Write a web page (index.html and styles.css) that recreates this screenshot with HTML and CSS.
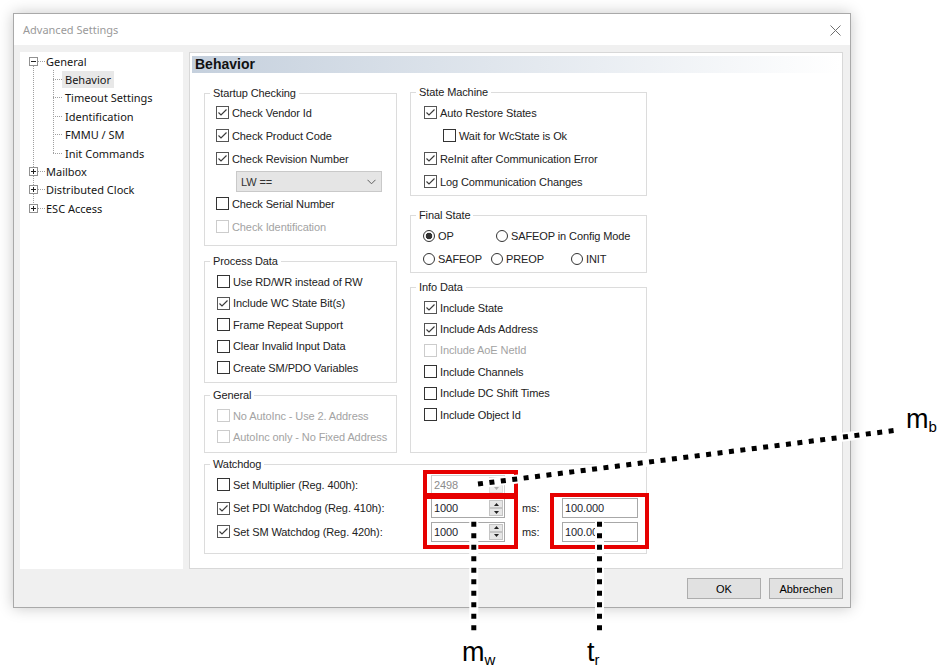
FILE: index.html
```html
<!DOCTYPE html>
<html>
<head>
<meta charset="utf-8">
<title>Advanced Settings</title>
<link rel="stylesheet" href="styles.css">
</head>
<body>
<div class="page">
  <div class="dialog">
    <div class="titlebar">
      <span class="title">Advanced Settings</span>
      <svg class="close" width="11" height="11" viewBox="0 0 11 11"><path d="M0.5 0.5L10.5 10.5M10.5 0.5L0.5 10.5" stroke="#707070" stroke-width="1" fill="none"/></svg>
    </div>
    <div class="dlg-body">
      <div class="main">
        <div class="tree">
          <div class="tree-root">
            <div class="trow root"><svg class="exp" width="9" height="9" viewBox="0 0 9 9"><rect x="0.5" y="0.5" width="8" height="8" fill="#fff" stroke="#919191"/><path d="M2 4.5h5" stroke="#222"/></svg><span class="hl"></span><span class="tl">General</span></div>
            <div class="trow child"><span class="hl"></span><span class="tl sel">Behavior</span></div>
            <div class="trow child"><span class="hl"></span><span class="tl">Timeout Settings</span></div>
            <div class="trow child"><span class="hl"></span><span class="tl">Identification</span></div>
            <div class="trow child"><span class="hl"></span><span class="tl">FMMU / SM</span></div>
            <div class="trow child"><span class="hl"></span><span class="tl">Init Commands</span></div>
            <div class="trow root"><svg class="exp" width="9" height="9" viewBox="0 0 9 9"><rect x="0.5" y="0.5" width="8" height="8" fill="#fff" stroke="#919191"/><path d="M2 4.5h5M4.5 2v5" stroke="#222"/></svg><span class="hl"></span><span class="tl">Mailbox</span></div>
            <div class="trow root"><svg class="exp" width="9" height="9" viewBox="0 0 9 9"><rect x="0.5" y="0.5" width="8" height="8" fill="#fff" stroke="#919191"/><path d="M2 4.5h5M4.5 2v5" stroke="#222"/></svg><span class="hl"></span><span class="tl">Distributed Clock</span></div>
            <div class="trow root"><svg class="exp" width="9" height="9" viewBox="0 0 9 9"><rect x="0.5" y="0.5" width="8" height="8" fill="#fff" stroke="#919191"/><path d="M2 4.5h5M4.5 2v5" stroke="#222"/></svg><span class="hl"></span><span class="tl">ESC Access</span></div>
          </div>
        </div>

        <div class="panel">
          <div class="ph">Behavior</div>
          <div class="content">
            <div class="cols">
              <div class="col">
                <div class="grp g-sc">
                  <div class="lg">Startup Checking</div>
                  <div class="rows">
                    <div class="row"><span class="chk on"><svg viewBox="0 0 11 11"><path d="M1.5 5.5L4 8L9.5 2.5"/></svg></span><span>Check Vendor Id</span></div>
                    <div class="row"><span class="chk on"><svg viewBox="0 0 11 11"><path d="M1.5 5.5L4 8L9.5 2.5"/></svg></span><span>Check Product Code</span></div>
                    <div class="row"><span class="chk on"><svg viewBox="0 0 11 11"><path d="M1.5 5.5L4 8L9.5 2.5"/></svg></span><span>Check Revision Number</span></div>
                    <div class="combo"><span>LW ==</span><svg width="9" height="6" viewBox="0 0 9 6"><path d="M0.5 0.8L4.5 4.8L8.5 0.8" stroke="#606060" fill="none"/></svg></div>
                    <div class="row"><span class="chk"></span><span>Check Serial Number</span></div>
                    <div class="row dis"><span class="chk"></span><span>Check Identification</span></div>
                  </div>
                </div>
                <div class="grp g-pd">
                  <div class="lg">Process Data</div>
                  <div class="rows">
                    <div class="row"><span class="chk"></span><span>Use RD/WR instead of RW</span></div>
                    <div class="row"><span class="chk on"><svg viewBox="0 0 11 11"><path d="M1.5 5.5L4 8L9.5 2.5"/></svg></span><span>Include WC State Bit(s)</span></div>
                    <div class="row"><span class="chk"></span><span>Frame Repeat Support</span></div>
                    <div class="row"><span class="chk"></span><span>Clear Invalid Input Data</span></div>
                    <div class="row"><span class="chk"></span><span>Create SM/PDO Variables</span></div>
                  </div>
                </div>
                <div class="grp g-ge">
                  <div class="lg">General</div>
                  <div class="rows">
                    <div class="row dis"><span class="chk"></span><span>No AutoInc - Use 2. Address</span></div>
                    <div class="row dis"><span class="chk"></span><span>AutoInc only - No Fixed Address</span></div>
                  </div>
                </div>
              </div>

              <div class="col">
                <div class="grp g-sm">
                  <div class="lg">State Machine</div>
                  <div class="rows">
                    <div class="row"><span class="chk on"><svg viewBox="0 0 11 11"><path d="M1.5 5.5L4 8L9.5 2.5"/></svg></span><span>Auto Restore States</span></div>
                    <div class="row indent"><span class="chk"></span><span>Wait for WcState is Ok</span></div>
                    <div class="row"><span class="chk on"><svg viewBox="0 0 11 11"><path d="M1.5 5.5L4 8L9.5 2.5"/></svg></span><span>ReInit after Communication Error</span></div>
                    <div class="row"><span class="chk on"><svg viewBox="0 0 11 11"><path d="M1.5 5.5L4 8L9.5 2.5"/></svg></span><span>Log Communication Changes</span></div>
                  </div>
                </div>
                <div class="grp g-fs">
                  <div class="lg">Final State</div>
                  <div class="rows">
                    <div class="row">
                      <span class="ropt w-op"><span class="rad on"></span><span>OP</span></span>
                      <span class="ropt"><span class="rad"></span><span>SAFEOP in Config Mode</span></span>
                    </div>
                    <div class="row">
                      <span class="ropt w-safe"><span class="rad"></span><span>SAFEOP</span></span>
                      <span class="ropt w-pre"><span class="rad"></span><span>PREOP</span></span>
                      <span class="ropt"><span class="rad"></span><span>INIT</span></span>
                    </div>
                  </div>
                </div>
                <div class="grp g-id">
                  <div class="lg">Info Data</div>
                  <div class="rows">
                    <div class="row"><span class="chk on"><svg viewBox="0 0 11 11"><path d="M1.5 5.5L4 8L9.5 2.5"/></svg></span><span>Include State</span></div>
                    <div class="row"><span class="chk on"><svg viewBox="0 0 11 11"><path d="M1.5 5.5L4 8L9.5 2.5"/></svg></span><span>Include Ads Address</span></div>
                    <div class="row dis"><span class="chk"></span><span>Include AoE NetId</span></div>
                    <div class="row"><span class="chk"></span><span>Include Channels</span></div>
                    <div class="row"><span class="chk"></span><span>Include DC Shift Times</span></div>
                    <div class="row"><span class="chk"></span><span>Include Object Id</span></div>
                  </div>
                </div>
              </div>
            </div>

            <div class="grp g-wd">
              <div class="lg">Watchdog</div>
              <div class="rows">
                <div class="wrow">
                  <div class="row"><span class="chk"></span><span>Set Multiplier (Reg. 400h):</span></div>
                  <div class="spin dis"><span class="val">2498</span><span class="sbtns"><span class="sb"><svg width="5" height="3" viewBox="0 0 5 3"><path d="M0 3L2.5 0L5 3Z" fill="#b0b0b0"/></svg></span><span class="sb"><svg width="5" height="3" viewBox="0 0 5 3"><path d="M0 0L2.5 3L5 0Z" fill="#b0b0b0"/></svg></span></span></div>
                </div>
                <div class="wrow">
                  <div class="row"><span class="chk on"><svg viewBox="0 0 11 11"><path d="M1.5 5.5L4 8L9.5 2.5"/></svg></span><span>Set PDI Watchdog (Reg. 410h):</span></div>
                  <div class="spin"><span class="val">1000</span><span class="sbtns"><span class="sb"><svg width="5" height="3" viewBox="0 0 5 3"><path d="M0 3L2.5 0L5 3Z" fill="#222"/></svg></span><span class="sb"><svg width="5" height="3" viewBox="0 0 5 3"><path d="M0 0L2.5 3L5 0Z" fill="#222"/></svg></span></span></div>
                  <span class="ms">ms:</span>
                  <div class="tb">100.000</div>
                </div>
                <div class="wrow">
                  <div class="row"><span class="chk on"><svg viewBox="0 0 11 11"><path d="M1.5 5.5L4 8L9.5 2.5"/></svg></span><span>Set SM Watchdog (Reg. 420h):</span></div>
                  <div class="spin"><span class="val">1000</span><span class="sbtns"><span class="sb"><svg width="5" height="3" viewBox="0 0 5 3"><path d="M0 3L2.5 0L5 3Z" fill="#222"/></svg></span><span class="sb"><svg width="5" height="3" viewBox="0 0 5 3"><path d="M0 0L2.5 3L5 0Z" fill="#222"/></svg></span></span></div>
                  <span class="ms">ms:</span>
                  <div class="tb">100.000</div>
                </div>
              </div>
            </div>
          </div>
        </div>
      </div>
      <div class="buttons">
        <button class="btn">OK</button>
        <button class="btn">Abbrechen</button>
      </div>
    </div>
  </div>
</div>

<svg class="annot" width="937" height="669" viewBox="0 0 937 669">
  <g fill="none" stroke="#e60000" stroke-width="4">
    <rect x="425" y="472" width="91" height="23"/>
    <rect x="425" y="497" width="91" height="50"/>
    <rect x="552" y="495" width="95" height="52"/>
  </g>
  <g stroke="#ffffff" stroke-width="9" fill="none">
    <line x1="476" y1="484.3" x2="900" y2="429.7"/>
    <line x1="473.8" y1="519" x2="473.8" y2="634"/>
    <line x1="599.5" y1="519" x2="599.5" y2="634"/>
  </g>
  <g stroke="#000000" stroke-width="5" stroke-dasharray="5 6.5" fill="none">
    <line x1="478" y1="484" x2="898" y2="430"/>
    <line x1="473.8" y1="521.7" x2="473.8" y2="632"/>
    <line x1="599.5" y1="521.7" x2="599.5" y2="632"/>
  </g>
  <text class="sym" x="906" y="428">m<tspan class="sub" dy="4">b</tspan></text>
  <text class="sym" x="462" y="661">m<tspan class="sub" dy="4">w</tspan></text>
  <text class="sym" x="587" y="661">t<tspan class="sub" dy="4">r</tspan></text>
</svg>
</body>
</html>
```

FILE: styles.css
```css
* { box-sizing: border-box; }
html, body { margin: 0; padding: 0; background: #ffffff; }
body {
  width: 937px;
  height: 669px;
  overflow: hidden;
  position: relative;
  font-family: "Liberation Sans", Arial, sans-serif;
  font-size: 11px;
  color: #222;
}
.page { padding: 13px 0 0 13px; }
.dialog {
  width: 838px;
  height: 595px;
  border: 1px solid #a9a9a9;
  background: #f0f0f0;
  box-shadow: 0 0 14px rgba(0, 0, 0, 0.22);
  display: flex;
  flex-direction: column;
}
.titlebar {
  height: 31px;
  flex: none;
  background: #ffffff;
  display: flex;
  align-items: center;
  justify-content: space-between;
  padding: 0 9px 0 9px;
}
.title { font-family: "Noto Sans", sans-serif; font-size: 11px; color: #9a9a9a; }
.close { display: block; margin-top: 1px; }
.dlg-body { flex: 1; padding: 7px 7px 8px 6px; display: flex; flex-direction: column; }
.main { display: flex; gap: 6px; height: 517px; flex: none; }

/* tree */
.tree {
  width: 163px;
  background: #ffffff;
  font-family: "Noto Sans", sans-serif;
  font-size: 11px;
  color: #151515;
}
.tree-root {
  background-image:
    repeating-linear-gradient(to bottom, #a0a0a0 0 1px, transparent 1px 2px),
    repeating-linear-gradient(to bottom, #a0a0a0 0 1px, transparent 1px 2px);
  background-repeat: no-repeat;
  background-size: 1px 138px, 1px 84px;
  background-position: 13px 14px, 33px 18px;
}
.trow { height: 18.4px; display: flex; align-items: center; white-space: nowrap; }
.trow.root { padding-left: 9px; }
.trow.child { padding-left: 33px; }
.exp { display: block; flex: none; }
.hl { height: 0; border-top: 1px dotted #a0a0a0; flex: none; }
.root .hl { width: 7px; }
.child .hl { width: 9px; }
.tl { padding: 1px 1px; line-height: 15px; }
.child .tl { padding: 1px 3px; }
.tl.sel { background: #e8e8e8; }

/* right panel */
.panel { flex: 1; background: #ffffff; border: 1px solid #d8d8d8; padding: 3px 2px; }
.ph {
  height: 17px;
  line-height: 17px;
  padding-left: 3px;
  font-weight: bold;
  font-size: 14px;
  color: #111;
  background: linear-gradient(to right, #c5d0dd, #ffffff);
}
.content { margin: 19px 0 0 12px; width: 443px; letter-spacing: -0.1px; }
.cols { display: grid; grid-template-columns: 193px 237px; column-gap: 13px; }
.col { display: flex; flex-direction: column; }
.grp { border: 1px solid #dcdcdc; }
.lg {
  margin: -7px 0 0 5px;
  padding: 0 3px;
  height: 13px;
  line-height: 13px;
  width: max-content;
  background: #ffffff;
  color: #222;
}
.row { display: flex; align-items: center; gap: 3px; white-space: nowrap; }
.dis { color: #a3a3a3; }
.chk {
  width: 13px;
  height: 13px;
  flex: none;
  border: 1px solid #333;
  background: #fff;
  display: flex;
}
.chk.on { border-color: #555; }
.chk svg { width: 11px; height: 11px; fill: none; stroke: #3a3a3a; stroke-width: 1.15; }
.dis .chk { border-color: #cccccc; }

/* startup checking */
.g-sc { height: 153px; margin-top: 1px; }
.g-sc .rows { padding: 1px 0 0 11px; }
.g-sc .row { height: 23px; }
.combo {
  margin: 1px 0 0 20px;
  width: 146px;
  height: 21px;
  background: #e5e5e5;
  border: 1px solid #c9c9c9;
  display: flex;
  align-items: center;
  justify-content: space-between;
  padding: 0 5px 0 4px;
  color: #333;
}
.combo svg { display: block; }

/* process data */
.g-pd { height: 122px; margin-top: 15px; }
.g-pd .rows { padding: 3px 0 0 12px; }
.g-pd .row { height: 21.5px; }

/* general */
.g-ge { height: 58px; margin-top: 12px; }
.g-ge .rows { padding: 3px 0 0 12px; }
.g-ge .row { height: 21px; }

/* state machine */
.g-sm { height: 104px; }
.g-sm .rows { padding: 2px 0 0 13px; }
.g-sm .row { height: 23px; }
.g-sm .row.indent { padding-left: 19px; }

/* final state */
.g-fs { height: 58px; margin-top: 19px; }
.g-fs .rows { padding: 2px 0 0 12px; }
.g-fs .row { height: 23px; gap: 0; }
.ropt { display: flex; align-items: center; gap: 3px; }
.w-op { width: 73px; }
.w-safe { width: 68px; }
.w-pre { width: 80px; }
.rad {
  width: 12px;
  height: 12px;
  border-radius: 50%;
  border: 1px solid #333;
  background: #fff;
  flex: none;
}
.rad.on { background: radial-gradient(circle, #333 0 3px, #fff 3.6px); }

/* info data */
.g-id { height: 166px; margin-top: 14px; }
.g-id .rows { padding: 3px 0 0 13px; }
.g-id .row { height: 21.4px; }

/* watchdog */
.g-wd { height: 90px; margin-top: 11px; }
.g-wd .rows { padding: 2px 0 0 12px; }
.wrow {
  display: grid;
  grid-template-columns: 214px 74px 57px 76px;
  align-items: center;
  height: 23.5px;
}
.spin {
  height: 20px;
  border: 1px solid #a8a8a8;
  background: #fff;
  display: flex;
  justify-content: space-between;
  align-items: stretch;
}
.spin .val { padding-left: 2px; line-height: 18px; color: #1c1c2c; }
.spin.dis { border-color: #cfcfcf; }
.spin.dis .val { color: #8c8c8c; }
.sbtns { width: 15px; display: flex; flex-direction: column; padding: 1px 1px 1px 0; gap: 0; }
.sb {
  flex: 1;
  background: #e6e6e6;
  border: 1px solid #c4c4c4;
  display: flex;
  align-items: center;
  justify-content: center;
}
.sb svg { display: block; }
.spin.dis .sb { background: #efefef; border-color: #dddddd; }
.ms { padding-left: 17px; }
.tb {
  height: 20px;
  border: 1px solid #a8a8a8;
  background: #fff;
  padding-left: 2px;
  line-height: 18px;
  color: #1c1c2c;
}

/* buttons */
.buttons { margin-top: 9px; display: flex; justify-content: flex-end; gap: 8px; }
.btn {
  width: 74px;
  height: 21px;
  background: #e1e1e1;
  border: 1px solid #adadad;
  font: 11px "Liberation Sans", Arial, sans-serif;
  color: #000;
  padding: 0;
}

/* annotation overlay */
.annot { position: absolute; left: 0; top: 0; pointer-events: none; }
.sym { font-family: "Liberation Sans", Arial, sans-serif; font-size: 27px; fill: #000; }
.sub { font-size: 15px; }
```
